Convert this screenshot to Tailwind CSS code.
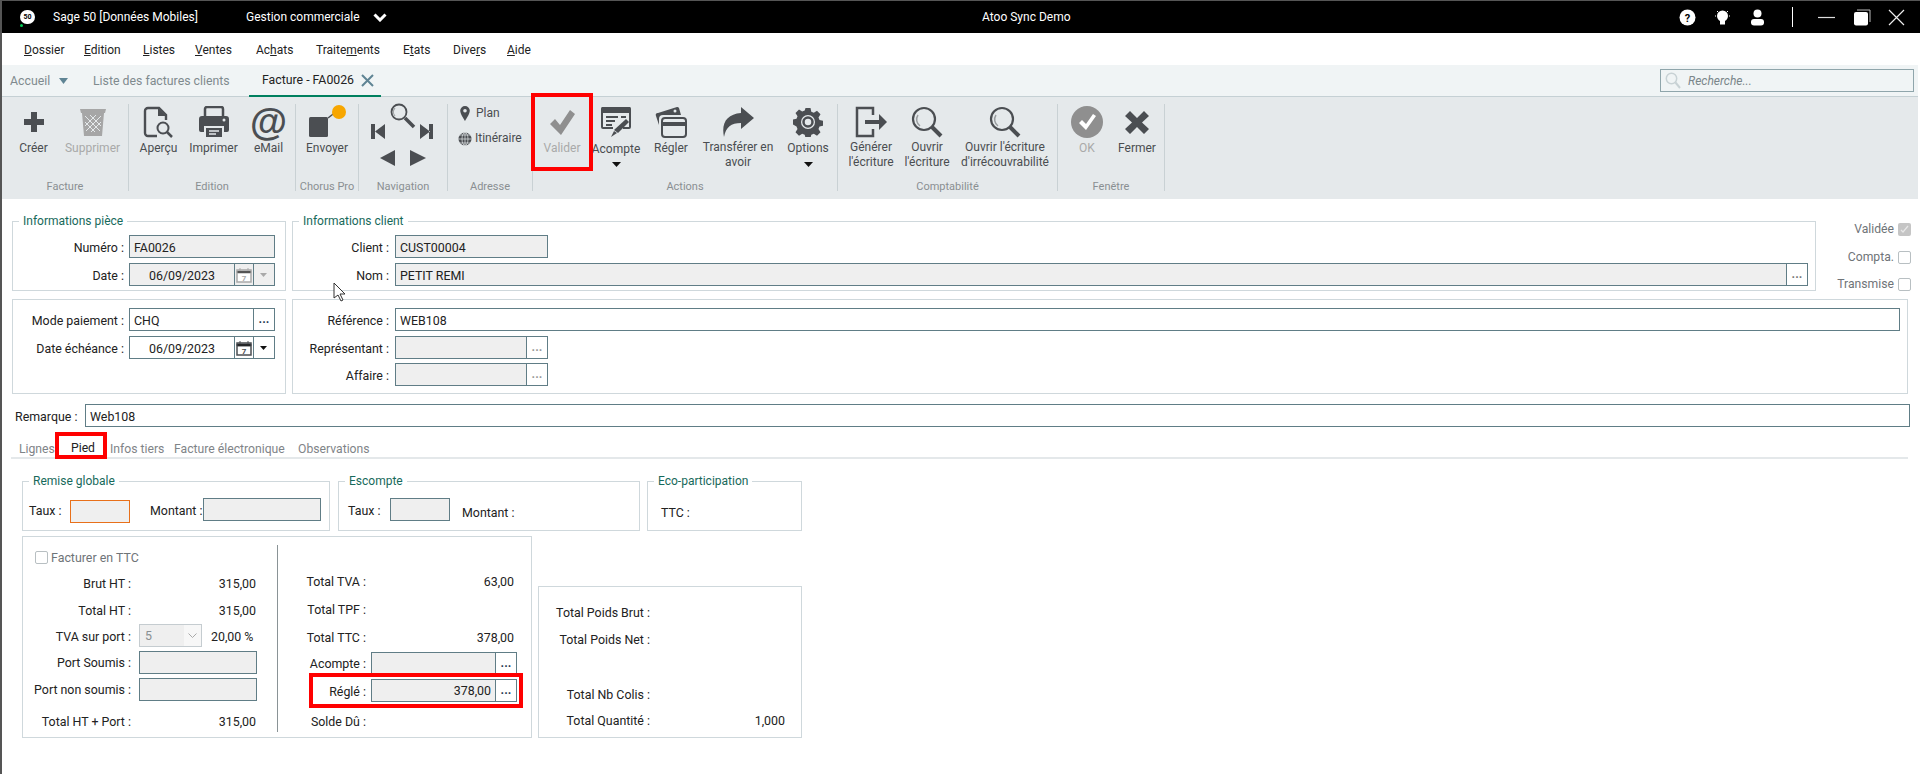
<!DOCTYPE html>
<html lang="fr">
<head>
  <meta charset="UTF-8">
  <title>Sage 50 - Facture FA0026</title>
  <script src="https://cdn.jsdelivr.net/npm/@tailwindcss/browser@4"></script>
</head>
<body class="font-['Roboto',sans-serif] text-[12px] leading-[16px] text-[#222] bg-white overflow-hidden">
<div class="relative w-[1920px] h-[774px] overflow-hidden border-t border-l-2 border-[#555] bg-white">

  <!-- title bar -->
  <header class="h-[32px] bg-black text-white flex items-center">
    <div class="relative w-[15px] h-[14px] rounded-full bg-white ml-[18px] flex items-center justify-center text-black text-[7px] font-bold">50
      <span class="absolute -left-[0px] -bottom-[3px] w-[3px] h-[3px] rounded-full bg-[#00c853]"></span>
    </div>
    <span class="ml-[18px] w-[193px] shrink-0">Sage 50 [Données Mobiles]</span>
    <span class="w-[127px] shrink-0">Gestion commerciale</span>
    <svg class="w-[14px] h-[9px]" viewBox="0 0 14 9"><path d="M1.5 1.5 7 7l5.500-5.500" fill="none" stroke="#fff" stroke-width="3"/></svg>
    <span class="ml-[595px] w-[96px] shrink-0">Atoo Sync Demo</span>
    <div class="ml-[601px] flex items-center">
      <svg class="w-[17px] h-[17px]" viewBox="0 0 17 17"><circle cx="8.500" cy="8.500" r="8" fill="#fff"/><text x="8.500" y="12.500" text-anchor="middle" font-size="11" font-weight="700" fill="#000">?</text></svg>
      <svg class="ml-[18px] w-[17px] h-[17px]" viewBox="0 0 17 17"><circle cx="8.500" cy="7" r="5.500" fill="#fff"/><rect x="6" y="12" width="5" height="3.500" fill="#fff"/><path d="M1 7h1M15 7h1M3 2l1 1M14 2l-1 1" stroke="#fff"/></svg>
      <svg class="ml-[18px] w-[17px] h-[17px]" viewBox="0 0 17 17"><circle cx="8.500" cy="4.500" r="4" fill="#fff"/><rect x="2" y="10" width="13" height="6.500" rx="3" fill="#fff"/></svg>
      <span class="ml-[26px] w-px h-[20px] bg-white"></span>
      <svg class="ml-[25px] w-[17px] h-[17px]" viewBox="0 0 17 17"><path d="M0 8.500h17" stroke="#ddd" stroke-width="1.200"/></svg>
      <svg class="ml-[18px] w-[18px] h-[17px]" viewBox="0 0 18 17"><path d="M4 1h13v12" fill="none" stroke="#bbb"/><rect x="1" y="3" width="14" height="13.500" rx="2" fill="#fff"/></svg>
      <svg class="ml-[17px] w-[17px] h-[17px]" viewBox="0 0 17 17"><path d="M1 1l15 15M16 1 1 16" stroke="#eee" stroke-width="1.200"/></svg>
    </div>
  </header>

  <!-- menu -->
  <nav class="h-[32px] pt-[2px] flex items-center text-[12px] text-[#222]">
    <span class="ml-[22px] w-[60px]"><u>D</u>ossier</span>
    <span class="w-[59px]"><u>E</u>dition</span>
    <span class="w-[52px]"><u>L</u>istes</span>
    <span class="w-[61px]"><u>V</u>entes</span>
    <span class="w-[60px]">Ac<u>h</u>ats</span>
    <span class="w-[87px]">Traite<u>m</u>ents</span>
    <span class="w-[50px]">E<u>t</u>ats</span>
    <span class="w-[54px]">Dive<u>r</u>s</span>
    <span><u>A</u>ide</span>
  </nav>

  <!-- tabs bar -->
  <div class="relative w-[1916px] h-[32px] bg-[#f0f4f5] border-b border-[#c5d0d4] flex items-center text-[12.3px] text-[#7f8a8e]">
    <span class="ml-[8px] w-[49px]">Accueil</span>
    <svg class="w-[9px] h-[6px]" viewBox="0 0 9 6"><path d="M0 0h9L4.500 6z" fill="#5f8494"/></svg>
    <span class="ml-[25px] w-[156px]">Liste des factures clients</span>
    <div class="h-full flex items-center border-b-2 border-[#00805f] w-[132px] pl-[13px] -mb-px text-[#222]">
      <span class="w-[99px] shrink-0">Facture - FA0026</span>
      <svg class="w-[13px] h-[13px]" viewBox="0 0 13 13"><path d="M1 1l11 11M12 1 1 12" stroke="#5f8494" stroke-width="2"/></svg>
    </div>
    <div class="ml-auto mr-[4px] w-[254px] h-[23px] border border-[#8fa5ab] flex items-center text-[12px] text-[#7a868a] italic">
      <svg class="ml-[4px] w-[16px] h-[17px]" viewBox="0 0 16 17"><circle cx="6.500" cy="6.500" r="5.200" fill="none" stroke="#c8d2d5" stroke-width="1.500"/><path d="M10.500 10.500 15 16" stroke="#c8d2d5" stroke-width="2"/></svg>
      <span class="ml-[7px]">Recherche...</span>
    </div>
  </div>

  <!-- ribbon -->
  <div class="w-[1916px] h-[102px] bg-[#e5e9eb] flex text-[#4a4d50]">

    <section class="w-[127px] h-[87px] mt-[7px] flex flex-col border-r border-[#c9d1d4]">
      <div class="flex pl-[2px]">
        <div class="w-[59px] flex flex-col items-center shrink-0">
          <div class="h-[36px] flex items-center justify-center"><svg class="w-[24px] h-[24px]" viewBox="0 0 24 24"><path d="M9 2h6v7h7v6h-7v7H9v-7H2V9h7z" fill="#4b4e52"/></svg></div>
          <span>Créer</span>
        </div>
        <div class="w-[59px] flex flex-col items-center shrink-0 text-[#a9a9a9]">
          <div class="h-[36px] flex items-center justify-center"><svg class="w-[30px] h-[30px]" viewBox="0 0 30 30"><path d="M2 2h26l-1 4H3z" fill="#a6a6a6"/><path d="M4 6h22l-2 23H6z" fill="#a6a6a6"/><path d="M7 9l15 15M12 8l11 11M7 15l10 10M23 9 8 24M18 8 7 19M23 15 13 25" stroke="#e5e9eb" stroke-width="1"/></svg></div>
          <span>Supprimer</span>
        </div>
      </div>
      <div class="mt-auto -mb-[3px] h-[14px] leading-[14px] text-center text-[11px] text-[#8a8f92]">Facture</div>
    </section>

    <section class="w-[167px] h-[87px] mt-[7px] flex flex-col border-r border-[#c9d1d4]">
      <div class="flex pl-[2px]">
        <div class="w-[55px] flex flex-col items-center shrink-0">
          <div class="h-[36px] flex items-center justify-center"><svg class="w-[32px] h-[32px]" viewBox="0 0 32 32"><path d="M14 30H5a3 3 0 0 1-3-3V5a3 3 0 0 1 3-3h11l7 7v5" fill="none" stroke="#4b4e52" stroke-width="2.400"/><path d="M15 2v8h8" fill="#4b4e52"/><circle cx="20" cy="22" r="5.500" fill="none" stroke="#4b4e52" stroke-width="2"/><path d="m24 26 5 5" stroke="#4b4e52" stroke-width="2.500"/></svg></div>
          <span>Aperçu</span>
        </div>
        <div class="w-[55px] flex flex-col items-center shrink-0">
          <div class="h-[36px] flex items-center justify-center"><svg class="w-[32px] h-[32px]" viewBox="0 0 32 32"><path d="M7 10V3a2 2 0 0 1 2-2h14a2 2 0 0 1 2 2v7" fill="none" stroke="#4b4e52" stroke-width="2.500"/><path d="M4 10h24a3 3 0 0 1 3 3v11a2 2 0 0 1-2 2h-3v-6H6v6H3a2 2 0 0 1-2-2V13a3 3 0 0 1 3-3z" fill="#4b4e52"/><path d="M8 22h16v9H8z" fill="#4b4e52"/><path d="M11 25h10M11 28h7" stroke="#e5e9eb" stroke-width="1.500"/><circle cx="26" cy="14" r="1.500" fill="#e5e9eb"/></svg></div>
          <span>Imprimer</span>
        </div>
        <div class="w-[55px] flex flex-col items-center shrink-0">
          <div class="h-[36px] flex items-center justify-center text-[38px] leading-[36px] font-bold font-['Liberation_Sans',sans-serif] text-[#4b4e52]">@</div>
          <span>eMail</span>
        </div>
      </div>
      <div class="mt-auto -mb-[3px] h-[14px] leading-[14px] text-center text-[11px] text-[#8a8f92]">Edition</div>
    </section>

    <section class="w-[63px] h-[87px] mt-[7px] flex flex-col border-r border-[#c9d1d4]">
      <div class="flex flex-col items-center">
        <div class="h-[36px] flex items-center justify-center"><svg class="w-[40px] h-[36px]" viewBox="0 0 40 36"><rect x="2" y="13" width="19" height="20" rx="1.500" fill="#4b4e52"/><path d="m21 14 9-7" stroke="#4b4e52" stroke-width="1.500"/><circle cx="32" cy="8" r="7" fill="#f7a600"/></svg></div>
        <span>Envoyer</span>
      </div>
      <div class="mt-auto -mb-[3px] h-[14px] leading-[14px] text-center text-[11px] text-[#8a8f92] whitespace-nowrap">Chorus Pro</div>
    </section>

    <section class="w-[89px] h-[87px] mt-[7px] flex flex-col border-r border-[#c9d1d4]">
      <svg class="-mt-px w-[88px] h-[66px]" viewBox="0 0 88 66">
        <circle cx="40" cy="9" r="7.500" fill="none" stroke="#4b4e52" stroke-width="1.800"/>
        <path d="M36 5a6 6 0 0 0 0 8" fill="none" stroke="#a0a4a6" stroke-width="1.200"/>
        <path d="m46 15 9 9" stroke="#4b4e52" stroke-width="3.500"/>
        <path d="M12 21h4v15h-4zM26 21v15l-10-7.500z" fill="#4b4e52"/>
        <path d="M70 21h4v15h-4zM61 21v15l10-7.500z" fill="#4b4e52"/>
        <path d="M36 47v16l-15-8z" fill="#4b4e52"/>
        <path d="M51 47v16l16-8z" fill="#4b4e52"/>
      </svg>
      <div class="mt-auto -mb-[3px] h-[14px] leading-[14px] text-center text-[11px] text-[#8a8f92]">Navigation</div>
    </section>

    <section class="w-[85px] h-[87px] mt-[7px] flex flex-col border-r border-[#c9d1d4]">
      <div class="flex items-center h-[18px] pl-[12px]">
        <svg class="w-[10px] h-[15px]" viewBox="0 0 10 15"><path d="M5 0a4.800 4.800 0 0 1 4.800 4.800C9.800 8 5 15 5 15S.2 8 .2 4.800A4.800 4.800 0 0 1 5 0z" fill="#4b4e52"/><circle cx="5" cy="4.800" r="1.800" fill="#e5e9eb"/></svg>
        <span class="ml-[6px]">Plan</span>
      </div>
      <div class="flex items-center h-[18px] mt-[7px] pl-[10px]">
        <svg class="w-[14px] h-[15px] shrink-0" viewBox="0 0 14 15"><circle cx="7" cy="8" r="6.500" fill="#4b4e52"/><path d="M.5 8h13M7 1.500v13M2 4h10M2 12h10" stroke="#e5e9eb" stroke-width=".7"/><ellipse cx="7" cy="8" rx="3" ry="6.500" fill="none" stroke="#e5e9eb" stroke-width=".7"/></svg>
        <span class="ml-[3px]">Itinéraire</span>
      </div>
      <div class="mt-auto -mb-[3px] h-[14px] leading-[14px] text-center text-[11px] text-[#8a8f92]">Adresse</div>
    </section>

    <section class="relative w-[305px] h-[87px] mt-[7px] flex flex-col border-r border-[#c9d1d4]">
      <div class="flex">
        <div class="relative w-[58px] flex flex-col items-center shrink-0 text-[#a9a9a9]">
          <div class="h-[36px] flex items-center justify-center"><svg class="w-[28px] h-[28px]" viewBox="0 0 28 28"><path d="M2 16l5-5 5 6L22 2l5 4-14 21z" fill="#8f8f8f"/></svg></div>
          <span>Valider</span>
          <div class="absolute -left-[2px] -top-[11px] w-[62px] h-[78px] border-4 border-[#f00]"></div>
        </div>
        <div class="w-[50px] flex flex-col items-center shrink-0">
          <div class="h-[36px] flex items-center justify-center"><svg class="w-[32px] h-[32px]" viewBox="0 0 32 32"><path d="M2 1h28a2 2 0 0 1 1 2v18a2 2 0 0 1-2 2H23v-2h6V7H3v14h10v2H3a2 2 0 0 1-2-2V3a2 2 0 0 1 1-2z" fill="#4b4e52"/><path d="M6 11h12M6 15h9M6 19h6M21 11h5" stroke="#4b4e52" stroke-width="2"/><path d="m26 13 3 3-11 11-4-3z" fill="#4b4e52"/><path d="m14 25 3 2-6 4z" fill="#4b4e52"/></svg></div>
          <span class="mt-px">Acompte</span>
          <svg class="mt-[5px] w-[9px] h-[5px]" viewBox="0 0 9 5"><path d="M0 0h9L4.500 5z" fill="#111"/></svg>
        </div>
        <div class="w-[60px] flex flex-col items-center shrink-0">
          <div class="h-[36px] flex items-center justify-center"><svg class="w-[32px] h-[32px]" viewBox="0 0 32 32"><path d="M3 7 22 1a2 2 0 0 1 2 1l2 7H8a4 4 0 0 0-4 4v6L1 10a2 2 0 0 1 2-3z" fill="#4b4e52"/><circle cx="20" cy="5" r="1.500" fill="#e5e9eb"/><rect x="7" y="12" width="24" height="19" rx="3" fill="none" stroke="#4b4e52" stroke-width="2"/><path d="M7 18h24" stroke="#4b4e52" stroke-width="4"/></svg></div>
          <span>Régler</span>
        </div>
        <div class="w-[74px] flex flex-col items-center shrink-0 text-center">
          <div class="h-[36px] flex items-center justify-center"><svg class="w-[32px] h-[30px]" viewBox="0 0 32 30"><path d="M19 0l13 11-13 11v-6C9 16 4 20 2 30-1 16 5 7 19 6z" fill="#4b4e52"/></svg></div>
          <span class="leading-[15px] whitespace-nowrap">Transférer en<br>avoir</span>
        </div>
        <div class="ml-[2px] w-[62px] flex flex-col items-center shrink-0">
          <div class="h-[36px] flex items-center justify-center"><svg class="w-[30px] h-[30px]" viewBox="0 0 30 30"><path d="M12.500 1h5l.8 3.700 2.500 1 3.200-2 3.500 3.500-2 3.200 1 2.500 3.500.8v5l-3.500.8-1 2.500 2 3.200-3.500 3.500-3.200-2-2.500 1-.8 3.300h-5l-.8-3.300-2.500-1-3.200 2-3.500-3.500 2-3.200-1-2.500L0 17.500v-5l3.500-.8 1-2.500-2-3.200L6 2.500l3.200 2 2.500-1z" fill="#4b4e52"/><circle cx="15" cy="15" r="7" fill="#e5e9eb"/><circle cx="15" cy="15" r="4.500" fill="none" stroke="#4b4e52" stroke-width="2.500"/></svg></div>
          <span>Options</span>
          <svg class="mt-[6px] w-[9px] h-[5px]" viewBox="0 0 9 5"><path d="M0 0h9L4.500 5z" fill="#111"/></svg>
        </div>
      </div>
      <div class="mt-auto -mb-[3px] h-[14px] leading-[14px] text-center text-[11px] text-[#8a8f92]">Actions</div>
    </section>

    <section class="w-[220px] h-[87px] mt-[7px] flex flex-col border-r border-[#c9d1d4]">
      <div class="flex">
        <div class="w-[66px] flex flex-col items-center shrink-0 text-center">
          <div class="h-[36px] flex items-center justify-center"><svg class="w-[32px] h-[32px]" viewBox="0 0 32 32"><path d="M18 9V2H2v28h16v-7" fill="none" stroke="#4b4e52" stroke-width="2.500"/><path d="M10 14h14V8l8 8-8 8v-6H10z" fill="#4b4e52"/></svg></div>
          <span class="leading-[15px]">Générer<br>l'écriture</span>
        </div>
        <div class="w-[46px] flex flex-col items-center shrink-0 text-center">
          <div class="h-[36px] flex items-center justify-center"><svg class="w-[32px] h-[32px]" viewBox="0 0 32 32"><circle cx="13" cy="13" r="11" fill="none" stroke="#4b4e52" stroke-width="2.200"/><path d="M7 9a8 8 0 0 0 2 11" fill="none" stroke="#9a9ea0" stroke-width="1.500"/><path d="m21 21 9 9" stroke="#4b4e52" stroke-width="4"/></svg></div>
          <span class="leading-[15px] whitespace-nowrap">Ouvrir<br>l'écriture</span>
        </div>
        <div class="ml-[2px] w-[106px] flex flex-col items-center shrink-0 text-center">
          <div class="h-[36px] flex items-center justify-center"><svg class="w-[32px] h-[32px]" viewBox="0 0 32 32"><circle cx="13" cy="13" r="11" fill="none" stroke="#4b4e52" stroke-width="2.200"/><path d="M7 9a8 8 0 0 0 2 11" fill="none" stroke="#9a9ea0" stroke-width="1.500"/><path d="m21 21 9 9" stroke="#4b4e52" stroke-width="4"/></svg></div>
          <span class="leading-[15px] whitespace-nowrap">Ouvrir l'écriture<br>d'irrécouvrabilité</span>
        </div>
      </div>
      <div class="mt-auto -mb-[3px] h-[14px] leading-[14px] text-center text-[11px] text-[#8a8f92]">Comptabilité</div>
    </section>

    <section class="w-[107px] h-[87px] mt-[7px] flex flex-col border-r border-[#c9d1d4]">
      <div class="flex">
        <div class="w-[58px] flex flex-col items-center shrink-0 text-[#a9a9a9]">
          <div class="h-[36px] flex items-center justify-center"><svg class="w-[32px] h-[32px]" viewBox="0 0 32 32"><circle cx="16" cy="16" r="16" fill="#8f8f8f"/><path d="m8 17 3-3 4 4 7-10 3 2-10 14z" fill="#fff"/></svg></div>
          <span>OK</span>
        </div>
        <div class="w-[42px] flex flex-col items-center shrink-0">
          <div class="h-[36px] flex items-center justify-center"><svg class="w-[24px] h-[23px]" viewBox="0 0 24 23"><path d="M5 0l7 7 7-7 5 5-7 6.500 7 6.500-5 5-7-7-7 7-5-5 7-6.500L0 5z" fill="#4b4e52"/></svg></div>
          <span>Fermer</span>
        </div>
      </div>
      <div class="mt-auto -mb-[3px] h-[14px] leading-[14px] text-center text-[11px] text-[#8a8f92]">Fenêtre</div>
    </section>
  </div>

  <!-- form -->
  <main class="pt-[22px] pl-[10px] text-[12.4px]">
    <div class="flex">
      <div class="relative w-[274px] h-[70px] border border-[#cfd8dc] pt-[13px]">
        <span class="absolute -top-[9px] left-[6px] bg-white px-[4px] text-[12px] text-[#17695b]">Informations pièce</span>
        <div class="flex items-center h-[23px]">
          <span class="mt-[2px] w-[111px] text-right">Numéro :</span>
          <div class="ml-[5px] w-[146px] h-[23px] border border-[#607d86] bg-[#efefef] leading-[23px] px-[4px]">FA0026</div>
        </div>
        <div class="flex items-center h-[23px] mt-[5px]">
          <span class="mt-[2px] w-[111px] text-right">Date :</span>
          <div class="ml-[5px] w-[146px] h-[23px] border border-[#607d86] bg-[#efefef] flex items-center">
            <span class="mt-[2px] w-[104px] text-center">06/09/2023</span>
            <div class="w-[20px] h-full border-l border-r border-[#607d86] flex items-center justify-center">
              <svg class="w-[16px] h-[16px]" viewBox="0 0 16 16"><rect x="1" y="3" width="14" height="12" fill="#fff" stroke="#a9a9a9" stroke-width="1.500"/><path d="M1 4h14v2H1zM4 1v3M12 1v3" stroke="#a9a9a9"/><text x="8" y="14" text-anchor="middle" font-size="8" font-weight="700" fill="#a9a9a9">7</text></svg>
            </div>
            <svg class="ml-[6px] w-[7px] h-[4px]" viewBox="0 0 7 4"><path d="M0 0h7L3.500 4z" fill="#a9a9a9"/></svg>
          </div>
        </div>
      </div>

      <div class="relative ml-[6px] w-[1524px] h-[70px] border border-[#cfd8dc] pt-[13px]">
        <span class="absolute -top-[9px] left-[6px] bg-white px-[4px] text-[12px] text-[#17695b]">Informations client</span>
        <div class="flex items-center h-[23px]">
          <span class="mt-[2px] w-[96px] text-right">Client :</span>
          <div class="ml-[6px] w-[153px] h-[23px] border border-[#607d86] bg-[#efefef] leading-[23px] px-[4px]">CUST00004</div>
        </div>
        <div class="flex items-center h-[23px] mt-[5px]">
          <span class="mt-[2px] w-[96px] text-right">Nom :</span>
          <div class="ml-[6px] w-[1413px] h-[23px] border border-[#607d86] flex">
            <span class="flex-1 bg-[#efefef] leading-[23px] px-[4px]">PETIT REMI</span>
            <span class="w-[21px] border-l border-[#607d86] text-center leading-[19px] font-bold text-[#777]">...</span>
          </div>
        </div>
      </div>

      <div class="ml-[7px] w-[88px] pt-[1px] text-[12.2px] text-[#6f7478]">
        <div class="flex items-center justify-end h-[14px]">Validée
          <span class="ml-[4px] w-[13px] h-[13px] rounded-[2px] bg-[#c5c5c5] flex items-center justify-center"><svg class="w-[9px] h-[9px]" viewBox="0 0 9 9"><path d="m1 5 2 2 5-6" fill="none" stroke="#e8e8e8" stroke-width="1.200"/></svg></span>
        </div>
        <div class="flex items-center justify-end h-[14px] mt-[14px]">Compta.
          <span class="ml-[4px] w-[13px] h-[13px] rounded-[2px] border border-[#b8bfc2]"></span>
        </div>
        <div class="flex items-center justify-end h-[14px] mt-[13px]">Transmise
          <span class="ml-[4px] w-[13px] h-[13px] rounded-[2px] border border-[#b8bfc2]"></span>
        </div>
      </div>
    </div>

    <div class="flex mt-[8px]">
      <div class="w-[274px] h-[95px] border border-[#cfd8dc] pt-[8px]">
        <div class="flex items-center h-[23px]">
          <span class="mt-[2px] w-[111px] text-right whitespace-nowrap">Mode paiement :</span>
          <div class="ml-[5px] w-[146px] h-[23px] border border-[#607d86] flex">
            <span class="flex-1 leading-[23px] px-[4px]">CHQ</span>
            <span class="w-[21px] border-l border-[#607d86] text-center leading-[19px] font-bold text-[#1f3a52]">...</span>
          </div>
        </div>
        <div class="flex items-center h-[23px] mt-[5px]">
          <span class="mt-[2px] w-[111px] text-right whitespace-nowrap">Date échéance :</span>
          <div class="ml-[5px] w-[146px] h-[23px] border border-[#607d86] flex items-center">
            <span class="mt-[2px] w-[104px] text-center">06/09/2023</span>
            <div class="w-[20px] h-full border-l border-r border-[#607d86] flex items-center justify-center">
              <svg class="w-[16px] h-[16px]" viewBox="0 0 16 16"><rect x="1" y="3" width="14" height="12" fill="#fff" stroke="#4b4e52" stroke-width="1.500"/><path d="M1 4h14v2H1zM4 1v3M12 1v3" stroke="#4b4e52"/><text x="8" y="14" text-anchor="middle" font-size="8" font-weight="700" fill="#4b4e52">7</text></svg>
            </div>
            <svg class="ml-[6px] w-[7px] h-[4px]" viewBox="0 0 7 4"><path d="M0 0h7L3.500 4z" fill="#111"/></svg>
          </div>
        </div>
      </div>

      <div class="ml-[6px] w-[1616px] h-[95px] border border-[#cfd8dc] pt-[8px]">
        <div class="flex items-center h-[23px]">
          <span class="mt-[2px] w-[96px] text-right">Référence :</span>
          <div class="ml-[6px] w-[1505px] h-[23px] border border-[#607d86] leading-[23px] px-[4px]">WEB108</div>
        </div>
        <div class="flex items-center h-[23px] mt-[5px]">
          <span class="mt-[2px] w-[96px] text-right whitespace-nowrap">Représentant :</span>
          <div class="ml-[6px] w-[153px] h-[23px] border border-[#607d86] flex">
            <span class="flex-1 bg-[#efefef]"></span>
            <span class="w-[21px] border-l border-[#607d86] text-center leading-[19px] font-bold text-[#999]">...</span>
          </div>
        </div>
        <div class="flex items-center h-[23px] mt-[4px]">
          <span class="mt-[2px] w-[96px] text-right">Affaire :</span>
          <div class="ml-[6px] w-[153px] h-[23px] border border-[#607d86] flex">
            <span class="flex-1 bg-[#efefef]"></span>
            <span class="w-[21px] border-l border-[#607d86] text-center leading-[19px] font-bold text-[#999]">...</span>
          </div>
        </div>
      </div>
    </div>

    <div class="flex items-center mt-[10px] -ml-[10px] pl-[13px]">
      <span class="mt-[2px] w-[67px] whitespace-nowrap">Remarque :</span>
      <div class="ml-[3px] w-[1825px] h-[23px] border border-[#607d86] leading-[23px] px-[4px]">Web108</div>
    </div>

    <!-- tabs -->
    <div class="relative mt-[5px] -ml-[1px] w-[1897px] h-[27px] pt-[8px] border-b-2 border-[#e4e8ea] flex items-center text-[12.2px] text-[#7f8488]">
      <span class="ml-[8px] w-[52px]">Lignes</span>
      <span class="w-[39px] -mt-[2px] text-[#222]">Pied</span>
      <span class="w-[64px]">Infos tiers</span>
      <span class="w-[124px]">Facture électronique</span>
      <span>Observations</span>
      <div class="absolute left-[44px] top-[0px] w-[52px] h-[27px] border-4 border-[#f00]"></div>
    </div>

    <div class="pl-[10px]">
      <div class="flex mt-[22px] items-start">
        <div class="relative w-[308px] h-[50px] border border-[#cfd8dc] flex items-start pl-[6px] pt-[16px]">
          <span class="absolute -top-[9px] left-[6px] bg-white px-[4px] text-[12px] text-[#17695b]">Remise globale</span>
          <span class="w-[41px] h-[23px] leading-[26px]">Taux :</span>
          <div class="mt-[2px] w-[60px] h-[23px] border border-[#e8701a] bg-[#efefef]"></div>
          <span class="ml-[20px] w-[53px] h-[23px] leading-[26px] whitespace-nowrap">Montant :</span>
          <div class="w-[118px] h-[23px] border border-[#607d86] bg-[#efefef]"></div>
        </div>
        <div class="relative ml-[8px] w-[302px] h-[50px] border border-[#cfd8dc] flex items-start pl-[9px] pt-[16px]">
          <span class="absolute -top-[9px] left-[6px] bg-white px-[4px] text-[12px] text-[#17695b]">Escompte</span>
          <span class="w-[42px] h-[23px] leading-[26px]">Taux :</span>
          <div class="w-[60px] h-[23px] border border-[#607d86] bg-[#efefef]"></div>
          <span class="ml-[12px] h-[23px] leading-[30px] whitespace-nowrap">Montant :</span>
        </div>
        <div class="relative ml-[7px] w-[155px] h-[50px] border border-[#cfd8dc] pl-[13px] pt-[23px]">
          <span class="absolute -top-[9px] left-[6px] bg-white px-[4px] text-[12px] text-[#17695b]">Eco-participation</span>
          TTC :
        </div>
      </div>

      <div class="flex mt-[5px] items-end">
        <div class="flex w-[510px] h-[202px] border border-[#cfd8dc]">
          <!-- left totals -->
          <div class="w-[254px] shrink-0 pt-[9px]">
            <div class="flex items-center h-[23px] pl-[12px] text-[#6f7478]">
              <span class="w-[13px] h-[13px] rounded-[2px] border border-[#b8bfc2]"></span>
              <span class="ml-[3px]">Facturer en TTC</span>
            </div>
            <div class="flex items-center h-[23px] mt-[3px]"><span class="w-[108px] text-right">Brut HT :</span><span class="ml-[8px] w-[117px] text-right">315,00</span></div>
            <div class="flex items-center h-[23px] mt-[4px]"><span class="w-[108px] text-right">Total HT :</span><span class="ml-[8px] w-[117px] text-right">315,00</span></div>
            <div class="flex items-center h-[23px] mt-[2px]">
              <span class="mt-[2px] w-[108px] text-right">TVA sur port :</span>
              <div class="ml-[8px] w-[63px] h-[23px] border border-[#c5ccd0] bg-[#efefef] flex items-center text-[#8a8f92]">
                <span class="flex-1 pl-[5px]">5</span>
                <span class="w-[17px] h-full bg-[#f7f7f7] flex items-center justify-center"><svg class="w-[9px] h-[5px]" viewBox="0 0 9 5"><path d="m.5.5 4 4 4-4" fill="none" stroke="#a9a9a9"/></svg></span>
              </div>
              <span class="mt-[2px] ml-[9px] whitespace-nowrap">20,00 %</span>
            </div>
            <div class="flex items-center h-[23px] mt-[4px]"><span class="w-[108px] text-right">Port Soumis :</span><div class="ml-[8px] w-[118px] h-[23px] border border-[#607d86] bg-[#efefef]"></div></div>
            <div class="flex items-center h-[23px] mt-[4px]"><span class="w-[108px] text-right whitespace-nowrap">Port non soumis :</span><div class="ml-[8px] w-[118px] h-[23px] border border-[#607d86] bg-[#efefef]"></div></div>
            <div class="flex items-center h-[23px] mt-[9px]"><span class="w-[108px] text-right whitespace-nowrap">Total HT + Port :</span><span class="ml-[8px] w-[117px] text-right">315,00</span></div>
          </div>
          <div class="w-px h-[187px] mt-[8px] bg-[#8a9396] shrink-0"></div>
          <!-- right totals -->
          <div class="pt-[33px]">
            <div class="flex items-center h-[23px]"><span class="w-[88px] text-right">Total TVA :</span><span class="ml-[5px] w-[143px] text-right">63,00</span></div>
            <div class="flex items-center h-[23px] mt-[5px]"><span class="w-[88px] text-right">Total TPF :</span></div>
            <div class="flex items-center h-[23px] mt-[5px]"><span class="w-[88px] text-right">Total TTC :</span><span class="ml-[5px] w-[143px] text-right">378,00</span></div>
            <div class="flex items-center h-[23px] mt-[3px]">
              <span class="w-[88px] text-right">Acompte :</span>
              <div class="ml-[5px] w-[146px] h-[23px] border border-[#607d86] flex">
                <span class="flex-1 bg-[#efefef]"></span>
                <span class="w-[21px] border-l border-[#607d86] text-center leading-[19px] font-bold text-[#1f3a52]">...</span>
              </div>
            </div>
            <div class="relative flex items-center h-[23px] mt-[4px]">
              <span class="mt-[2px] w-[88px] text-right">Réglé :</span>
              <div class="ml-[5px] w-[146px] h-[23px] border border-[#607d86] flex">
                <span class="flex-1 bg-[#efefef] leading-[21px] text-right pr-[4px]">378,00</span>
                <span class="w-[21px] border-l border-[#607d86] text-center leading-[19px] font-bold text-[#1f3a52]">...</span>
              </div>
              <div class="absolute left-[31px] -top-[6px] w-[214px] h-[35px] border-4 border-[#f00]"></div>
            </div>
            <div class="flex items-center h-[23px] mt-[8px]"><span class="w-[88px] text-right">Solde Dû :</span></div>
          </div>
        </div>

        <div class="ml-[6px] w-[264px] h-[152px] border border-[#cfd8dc] pt-[14px]">
          <div class="flex items-center h-[23px]"><span class="w-[111px] text-right whitespace-nowrap">Total Poids Brut :</span></div>
          <div class="flex items-center h-[23px] mt-[4px]"><span class="w-[111px] text-right whitespace-nowrap">Total Poids Net :</span></div>
          <div class="flex items-center h-[23px] mt-[32px]"><span class="w-[111px] text-right whitespace-nowrap">Total Nb Colis :</span></div>
          <div class="flex items-center h-[23px] mt-[3px]"><span class="w-[111px] text-right whitespace-nowrap">Total Quantité :</span><span class="w-[135px] text-right">1,000</span></div>
        </div>
      </div>
    </div>
  </main>

  <!-- mouse pointer -->
  <svg class="absolute left-[331px] top-[281px] w-[14px] h-[20px]" viewBox="0 0 14 20"><path d="M1 1v15l4-3 3 6 2-1-3-6h5z" fill="#fff" stroke="#333"/></svg>
</div>
</body>
</html>
